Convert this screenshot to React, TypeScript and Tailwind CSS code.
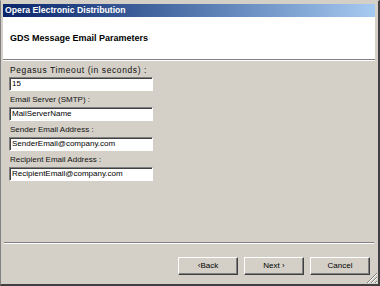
const FIELDS = [
  { label: "Pegasus Timeout (in seconds) :", value: "15", wide: true },
  { label: "Email Server (SMTP) :", value: "MailServerName", wide: false },
  { label: "Sender Email Address :", value: "SenderEmail@company.com", wide: false },
  { label: "Recipient Email Address :", value: "RecipientEmail@company.com", wide: false },
];

// classic raised 3D button
function Button({ children }: { children: React.ReactNode }) {
  return (
    <button className="w-[60px] h-[18px] bg-[#d4d0c8] border border-t-white border-l-white border-r-[#404040] border-b-[#404040] shadow-[inset_-1px_-1px_0_#808080] text-[8px] leading-[14px] text-black">
      {children}
    </button>
  );
}

export default function App() {
  return (
    <div
      className="relative w-[380px] h-[286px] bg-[#d4d0c8] border-t border-l border-t-[#d4d0c8] border-l-[#808080] border-r-2 border-b-2 border-r-[#404040] border-b-[#404040] pl-[2px] pr-[3px] pt-[3px] flex flex-col"
      style={{ fontFamily: '"Liberation Sans", Arial, sans-serif' }}
    >
      {/* Title bar */}
      <div className="h-[13px] shrink-0 bg-gradient-to-r from-[#0a246a] to-[#a6caf0] pl-[2px] text-white font-bold text-[8.7px] leading-[13px]">
        Opera Electronic Distribution
      </div>

      {/* Wizard header */}
      <div className="h-[43px] shrink-0 bg-white border-b border-b-[#808080] flex items-center pl-[7px] pt-[1px]">
        <span className="font-bold text-[9px] text-black">GDS Message Email Parameters</span>
      </div>

      {/* Fields */}
      <div className="flex-1 border-t border-t-white pt-[3px] pl-[6px] flex flex-col gap-[3px]">
        {FIELDS.map((f) => (
          <div key={f.label} className="flex flex-col gap-[1px]">
            <div
              className={
                f.wide
                  ? "h-[12px] pl-[1px] text-[8.5px] leading-[12px] tracking-[0.6px] text-[#111]"
                  : "h-[12px] pl-[1px] text-[8px] leading-[12px] text-[#111]"
              }
            >
              {f.label}
            </div>
            <div className="w-[144px] h-[14px] bg-white border border-t-[#808080] border-l-[#808080] border-r-white border-b-white shadow-[inset_1px_1px_0_#404040] pl-[2px] text-[8px] leading-[12px] text-black">
              {f.value}
            </div>
          </div>
        ))}
      </div>

      {/* Separator + buttons */}
      <div className="shrink-0 h-[2px] mx-[1px] border-t border-t-[#808080] border-b border-b-white" />
      <div className="shrink-0 flex justify-end gap-[6px] pr-[5px] mt-[13px] mb-[9px]">
        <Button>‹Back</Button>
        <Button>Next ›</Button>
        <Button>Cancel</Button>
      </div>

      {/* Size grip */}
      <svg className="absolute right-0 bottom-0" width="12" height="12" viewBox="0 0 12 12">
        <path d="M11 1 L1 11 M11 5 L5 11 M11 9 L9 11" stroke="#808080" strokeWidth="1" />
        <path d="M11 2 L2 11 M11 6 L6 11 M11 10 L10 11" stroke="#ffffff" strokeWidth="1" />
      </svg>
    </div>
  );
}
